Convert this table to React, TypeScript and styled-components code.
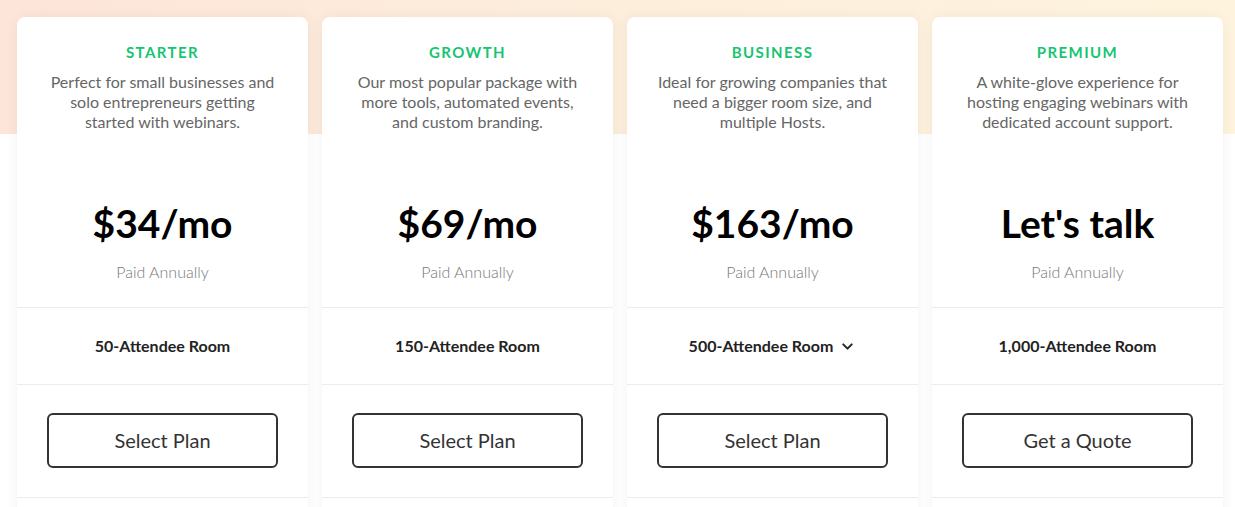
import React from 'react';
import styled, { createGlobalStyle } from 'styled-components';
import { ChevronDown } from 'lucide-react';

const GlobalStyle = createGlobalStyle`
  * { box-sizing: border-box; }
  html, body { margin: 0; padding: 0; background: #ffffff; }
  body { font-family: Lato, "Open Sans", sans-serif; overflow: hidden; }
`;

type Plan = {
  name: string;
  blurb: string[];
  price: string;
  room: string;
  dropdown?: boolean;
  cta: string;
};

const plans: Plan[] = [
  {
    name: 'Starter',
    blurb: ['Perfect for small businesses and', 'solo entrepreneurs getting', 'started with webinars.'],
    price: '$34/mo',
    room: '50-Attendee Room',
    cta: 'Select Plan',
  },
  {
    name: 'Growth',
    blurb: ['Our most popular package with', 'more tools, automated events,', 'and custom branding.'],
    price: '$69/mo',
    room: '150-Attendee Room',
    cta: 'Select Plan',
  },
  {
    name: 'Business',
    blurb: ['Ideal for growing companies that', 'need a bigger room size, and', 'multiple Hosts.'],
    price: '$163/mo',
    room: '500-Attendee Room',
    dropdown: true,
    cta: 'Select Plan',
  },
  {
    name: 'Premium',
    blurb: ['A white-glove experience for', 'hosting engaging webinars with', 'dedicated account support.'],
    price: "Let's talk",
    room: '1,000-Attendee Room',
    cta: 'Get a Quote',
  },
];

function App() {
  return (
    <Page>
      <GlobalStyle />
      <CardGrid>
        {plans.map((plan) => (
          <Card key={plan.name}>
            <Header>
              <Tier>{plan.name}</Tier>
              <Blurb>
                {plan.blurb.map((line) => (
                  <span key={line}>{line}</span>
                ))}
              </Blurb>
              <Price>{plan.price}</Price>
              <Billing>Paid Annually</Billing>
            </Header>
            <RoomRow>
              <RoomLabel>
                {plan.room}
                {plan.dropdown && <ChevronDown size={17} strokeWidth={2.75} />}
              </RoomLabel>
            </RoomRow>
            <ActionRow>
              <PlanButton>{plan.cta}</PlanButton>
            </ActionRow>
            <Features />
          </Card>
        ))}
      </CardGrid>
    </Page>
  );
}

const Page = styled.div`
  width: 1235px;
  height: 507px;
  overflow: hidden;
  background:
    linear-gradient(90deg, #fde5d9 0%, #fdeedc 50%, #fef4de 100%) top / 100% 134px no-repeat,
    #ffffff;
`;

const CardGrid = styled.div`
  display: grid;
  grid-template-columns: repeat(4, 291px);
  column-gap: 14px;
  padding: 17px 0 0 17px;
`;

const Card = styled.div`
  background: #ffffff;
  border-radius: 8px 8px 0 0;
  box-shadow: 0 0 14px rgba(0, 0, 0, 0.05);
  display: flex;
  flex-direction: column;
`;

const Header = styled.div`
  display: flex;
  flex-direction: column;
  align-items: center;
  padding: 25px 0 25px;
  border-bottom: 1px solid #ececec;
`;

const Tier = styled.div`
  font-size: 15px;
  line-height: 20px;
  font-weight: 700;
  letter-spacing: 1.4px;
  text-transform: uppercase;
  color: #17c472;
`;

const Blurb = styled.p`
  margin: 10px 0 0;
  display: flex;
  flex-direction: column;
  align-items: center;
  font-size: 16px;
  line-height: 20px;
  color: #666666;
  text-align: center;
`;

const Price = styled.div`
  margin-top: 67px;
  font-size: 39px;
  line-height: 48px;
  font-weight: 700;
  color: #000000;
`;

const Billing = styled.div`
  margin-top: 15px;
  font-size: 16px;
  line-height: 20px;
  font-weight: 300;
  color: #777777;
`;

const RoomRow = styled.div`
  height: 77px;
  display: flex;
  align-items: center;
  justify-content: center;
  border-bottom: 1px solid #ececec;
`;

const RoomLabel = styled.div`
  display: flex;
  align-items: center;
  gap: 6px;
  margin-top: 0;
  font-size: 16px;
  line-height: 20px;
  font-weight: 700;
  color: #222222;
`;

const ActionRow = styled.div`
  display: flex;
  justify-content: center;
  padding: 28px 0 29px;
  border-bottom: 1px solid #ececec;
`;

const PlanButton = styled.button`
  width: 231px;
  height: 55px;
  padding: 0 0 2px;
  border: 2px solid #333333;
  border-radius: 6px;
  background: #ffffff;
  font-family: Lato, "Open Sans", sans-serif;
  font-size: 20px;
  color: #333333;
  cursor: pointer;
`;

const Features = styled.div`
  height: 40px;
`;

export default App;
